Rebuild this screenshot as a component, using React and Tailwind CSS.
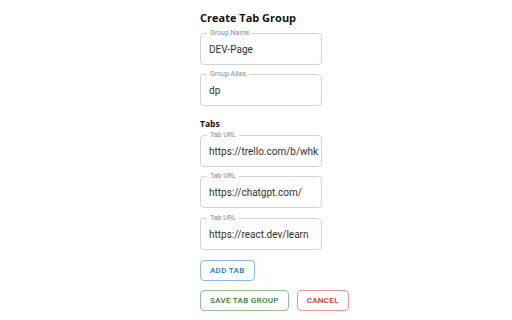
import React, { useState } from "react";

function OutlinedField({ label, value, onChange, className = "" }) {
    return (
        <div className={`relative h-[32px] w-[122px] rounded-[4px] border border-[#d4d4d4] ${className}`}>
            <span className="absolute -top-[5px] left-[6px] bg-white px-[3px] text-[7px] leading-[9px] text-[#8c8c8c]">
                {label}
            </span>
            <input
                type="text"
                value={value}
                onChange={(e) => onChange(e.target.value)}
                className="h-full w-full bg-transparent pl-[8px] pr-[2px] text-[10px] text-[#303030] focus:outline-none"
            />
        </div>
    );
}

export default function App() {
    const [name, setName] = useState("DEV-Page");
    const [alias, setAlias] = useState("dp");
    const [tabs, setTabs] = useState([
        "https://trello.com/b/whkxyz/dev-board",
        "https://chatgpt.com/",
        "https://react.dev/learn",
    ]);

    const updateTab = (i, v) => setTabs((prev) => prev.map((t, idx) => (idx === i ? v : t)));

    return (
        <div className="min-h-screen bg-white pl-[200px] pt-[10px] font-['Roboto',sans-serif]">
            <h1 className="h-[16px] font-['Open_Sans',sans-serif] text-[11px] font-bold leading-[16px] text-[#111]">
                Create Tab Group
            </h1>
            <OutlinedField className="mt-[7px]" label="Group Name" value={name} onChange={setName} />
            <OutlinedField className="mt-[9px]" label="Group Alias" value={alias} onChange={setAlias} />

            <h2 className="mt-[11px] h-[14px] font-['Open_Sans',sans-serif] text-[8.5px] font-bold leading-[14px] text-[#111]">
                Tabs
            </h2>
            <OutlinedField className="mt-[4px]" label="Tab URL" value={tabs[0]} onChange={(v) => updateTab(0, v)} />
            <OutlinedField className="mt-[9px]" label="Tab URL" value={tabs[1]} onChange={(v) => updateTab(1, v)} />
            <OutlinedField className="mt-[10px]" label="Tab URL" value={tabs[2]} onChange={(v) => updateTab(2, v)} />

            <button
                onClick={() => setTabs([...tabs, ""])}
                className="mt-[10px] h-[21px] rounded-[4px] border border-[#1976d2]/50 px-[9px] text-[8px] font-medium uppercase tracking-[0.3px] text-[#1976d2]"
            >
                Add Tab
            </button>

            <div className="mt-[9px] flex gap-[8px]">
                <button className="h-[21px] rounded-[4px] border border-[#2e7d32]/50 px-[9px] text-[8px] font-medium uppercase tracking-[0.3px] text-[#2e7d32]">
                    Save Tab Group
                </button>
                <button className="h-[21px] rounded-[4px] border border-[#d32f2f]/50 px-[9px] text-[8px] font-medium uppercase tracking-[0.3px] text-[#d32f2f]">
                    Cancel
                </button>
            </div>
        </div>
    );
}
